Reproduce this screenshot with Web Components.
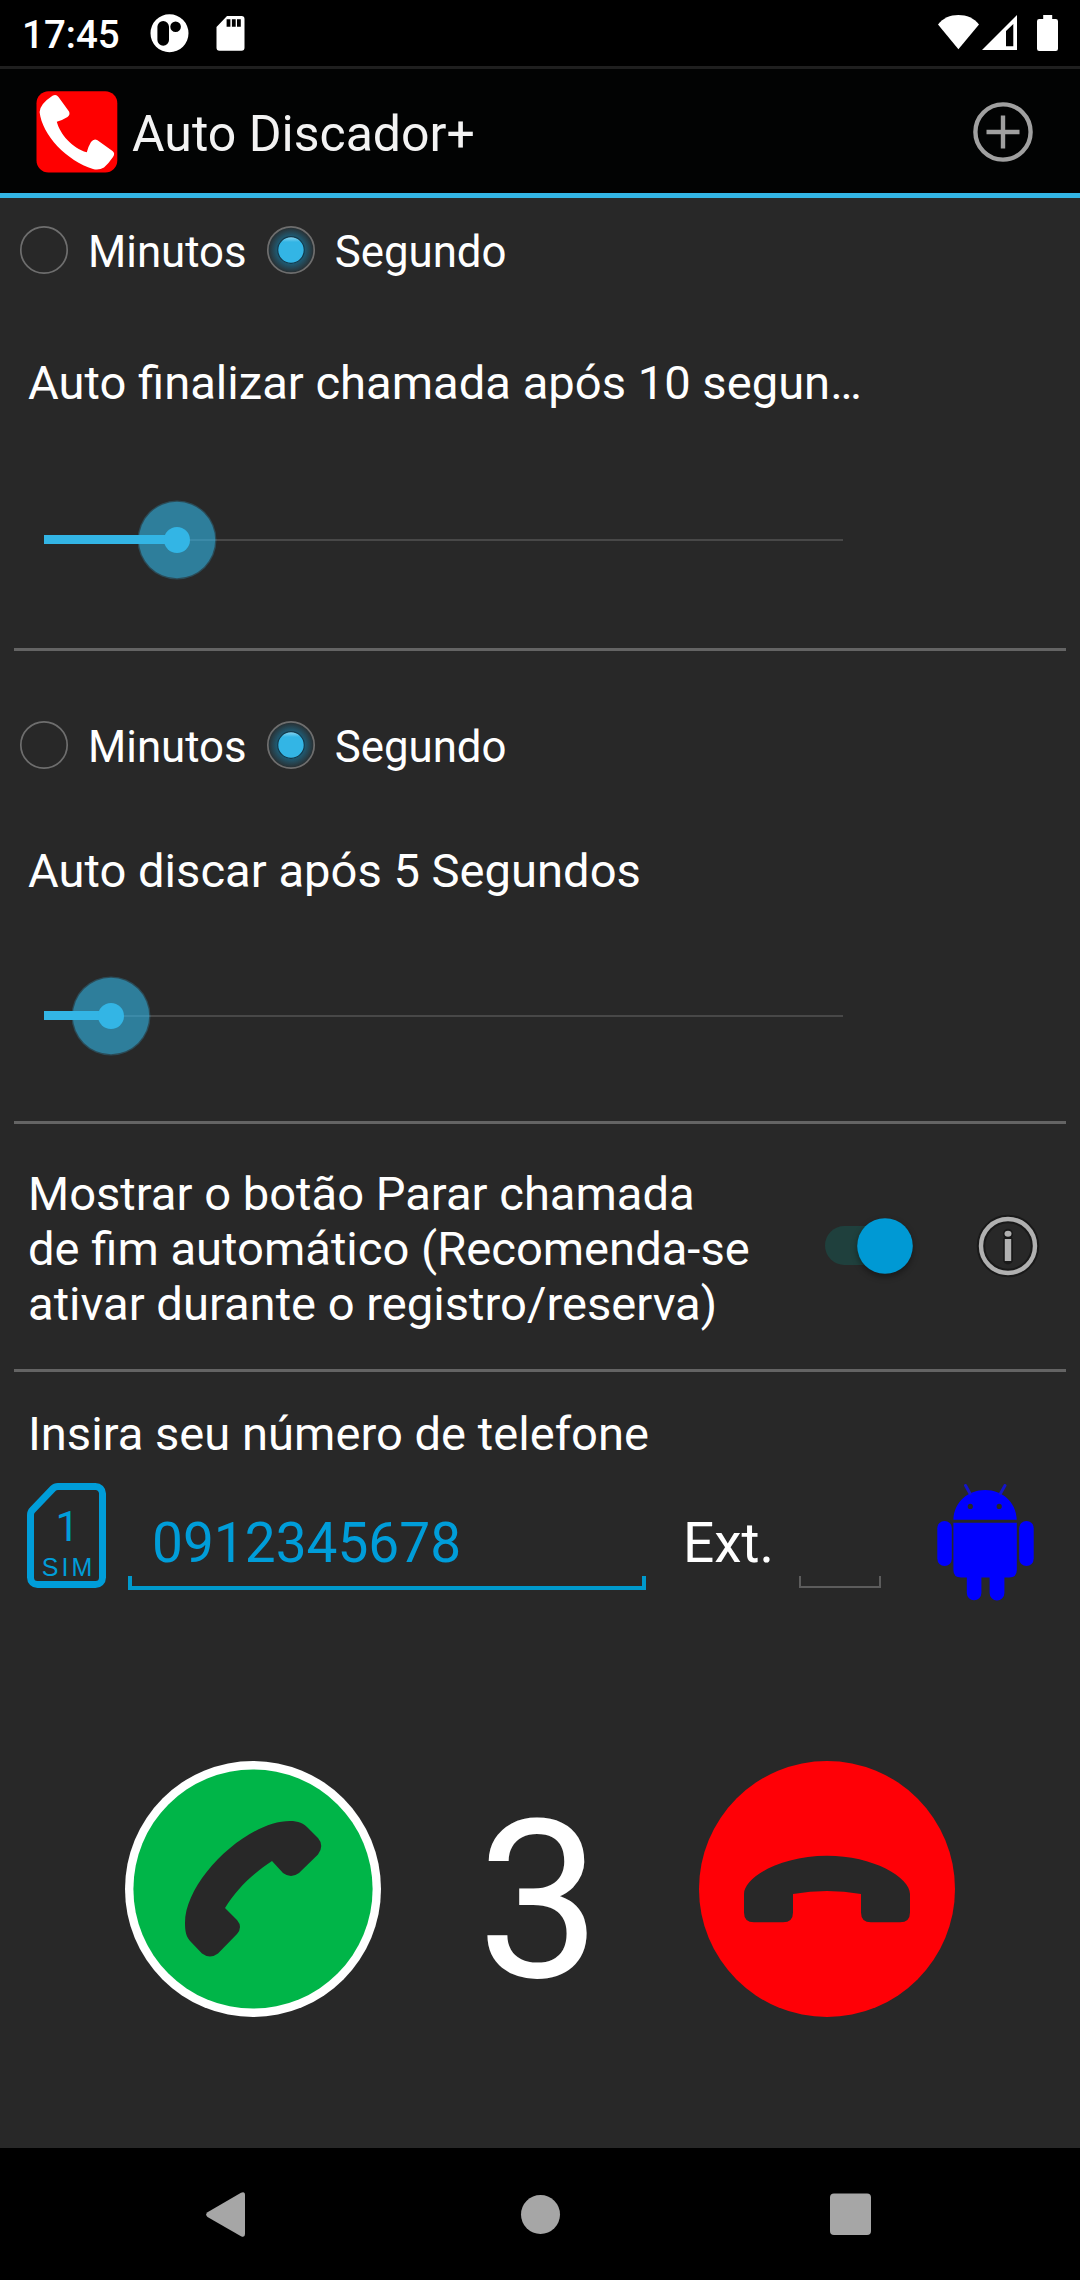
<!DOCTYPE html>
<html lang="pt">
<head>
<meta charset="utf-8">
<title>Auto Discador+</title>
<style>
  body {
    margin: 0;
    width: 1080px;
    height: 2280px;
    overflow: hidden;
    background: #282828;
    color: #ffffff;
    font-family: Roboto, "Liberation Sans", sans-serif;
  }
</style>
</head>
<body>
<dialer-app></dialer-app>

<script>
class StatusBar extends HTMLElement {
  constructor() {
    super();
    const shadow = this.attachShadow({mode: 'open'});
    shadow.innerHTML = `
    <style>
    :host {
      display: flex;
      justify-content: space-between;
      box-sizing: border-box;
      height: 69px;
      padding-left: 22px;
      background: #000000;
      border-bottom: 3px solid #1f1f1f;
    }
    .left { display: flex; }
    .time {
      width: 122px;
      font-size: 38.5px;
      font-weight: 500;
      line-height: 69px;
    }
    svg { display: block; fill: #ffffff; }
    </style>
    <div class="left">
      <span class="time"><slot></slot></span>
      <svg width="110" height="66" viewBox="144 0 110 66">
        <path fill-rule="evenodd" d="M169.5 14.3a19 19 0 1 0 0 38a19 19 0 1 0 0-38zM163.2 21a5.8 5.8 0 0 1 5.8 5.8V40a5.8 5.8 0 0 1-11.6 0V26.8a5.8 5.8 0 0 1 5.8-5.8zM175.6 21.4a5.3 5.3 0 1 1 0 10.6a5.3 5.3 0 1 1 0-10.6z"/>
        <path fill-rule="evenodd" d="M227 16h14.5q3 0 3 3v28.8q0 3-3 3h-22q-3 0-3-3V27zM226.6 19.3v7.4h3.8v-7.4zM231.9 19.3v7.4h3.8v-7.4zM237 19.3v7.4h3.8v-7.4z"/>
      </svg>
    </div>
    <svg width="150" height="66" viewBox="930 0 150 66">
      <path d="M958.4 49.3L938 24.6C943 18 950 15 958.4 15S974 18 979 24.6z"/>
      <path fill-rule="evenodd" d="M982 50L1017 15V50zM1006 46.3h7.3V24l-7.3 7z"/>
      <path d="M1043.2 15h9v4h3.6q2.2 0 2.2 2.2v27.6q0 2.2-2.2 2.2h-16.6q-2.2 0-2.2-2.2v-27.6q0-2.2 2.2-2.2h4z"/>
    </svg>
    `;
  }
}

class ActionBar extends HTMLElement {
  constructor() {
    super();
    const shadow = this.attachShadow({mode: 'open'});
    shadow.innerHTML = `
    <style>
    :host {
      display: flex;
      align-items: center;
      box-sizing: border-box;
      height: 129px;
      padding: 2px 44px 0 36px;
      background: #020303;
      border-bottom: 5px solid #33b5e5;
    }
    svg { display: block; }
    .title {
      flex: 1;
      margin: 4px 0 0 14px;
      color: #f3f3f3;
      font-size: 50px;
      line-height: 58px;
    }
    </style>
    <svg width="82" height="82" viewBox="36 91 82 82">
      <rect x="36.5" y="91.2" width="80.8" height="81.3" rx="12" fill="#ff0000"/>
      <path fill="#ffffff" d="M52.5 95.8Q56 93.5 58.5 97L69 111.5Q70.5 114.5 67.5 117Q62 120.5 56.8 121.7C60 134 72 148 86.8 152.3Q88 147 91 142Q94 138 97.5 140.3L112.5 151Q115.500 153.5 113 157Q109 163 104 167.5Q99 170.5 93 169C67 161 42 135 39.6 112Q40 104 52.5 95.8z"/>
    </svg>
    <span class="title"><slot></slot></span>
    <svg width="66" height="66" viewBox="-33 -33 66 66" fill="none" stroke="#a0a0a0" stroke-width="4.4">
      <circle r="27.6"/>
      <path d="M-16.5 0h33M0 -16.5v33"/>
    </svg>
    `;
  }
}

class RadioOption extends HTMLElement {
  constructor() {
    super();
    const shadow = this.attachShadow({mode: 'open'});
    const on = this.hasAttribute('checked');
    shadow.innerHTML = `
    <style>
    :host {
      display: flex;
      align-items: center;
      height: 88px;
      font-size: 43.8px;
      line-height: 52px;
    }
    svg { display: block; }
    span { margin-top: 4px; }
    </style>
    <svg width="88" height="88" viewBox="-44 -44 88 88">
      <defs>
        <radialGradient id="glow">
          <stop offset="0.55" stop-color="#1d5f7a"/>
          <stop offset="0.8" stop-color="#26434f"/>
          <stop offset="1" stop-color="#282c2e"/>
        </radialGradient>
        <linearGradient id="dot" x2="0" y2="1">
          <stop offset="0" stop-color="#8fd6f0"/>
          <stop offset="0.2" stop-color="#33b5e5"/>
        </linearGradient>
      </defs>
      <circle r="23.2" fill="${on ? 'url(#glow)' : 'none'}" stroke="#6e6e6e" stroke-width="1.7"/>
      ${on ? '<circle r="13.3" fill="url(#dot)" stroke="#14394a" stroke-width="1.2"/>' : ''}
    </svg>
    <span><slot></slot></span>
    `;
  }
}

class SeekBar extends HTMLElement {
  constructor() {
    super();
    const shadow = this.attachShadow({mode: 'open'});
    const pos = Number(this.getAttribute('value'));
    shadow.innerHTML = `
    <style>
    :host { display: block; height: 88px; }
    svg { display: block; overflow: visible; }
    </style>
    <svg width="887" height="88" viewBox="-44 -44 887 88">
      <rect x="0" y="-1" width="799" height="2" fill="#484848"/>
      <circle cx="${pos}" r="39.5" fill="#33b5e5" fill-opacity="0.25"/>
      <circle cx="${pos}" r="38.2" fill="#33b5e5" fill-opacity="0.48"/>
      <rect x="0" y="-5" width="${pos}" height="9" fill="#33b5e5"/>
      <circle cx="${pos}" r="13" fill="#33b5e5"/>
    </svg>
    `;
  }
}

/* Unit choice, caption and seek bar of one timer. */
class TimerSetting extends HTMLElement {
  constructor() {
    super();
    const shadow = this.attachShadow({mode: 'open'});
    shadow.innerHTML = `
    <style>
    :host {
      display: flex;
      flex-direction: column;
      box-sizing: border-box;
      height: var(--height);
      padding-top: var(--top);
    }
    .units { display: flex; }
    .caption {
      margin: var(--caption-gap) 0 var(--bar-gap) 28px;
      font-size: 47.15px;
      line-height: 56px;
      white-space: nowrap;
    }
    </style>
    <div class="units">
      <radio-option>Minutos</radio-option>
      <radio-option checked>Segundo</radio-option>
    </div>
    <div class="caption"><slot></slot></div>
    <seek-bar value="${this.getAttribute('value')}"></seek-bar>
    `;
  }
}

class RowDivider extends HTMLElement {
  constructor() {
    super();
    const shadow = this.attachShadow({mode: 'open'});
    shadow.innerHTML = `
    <style>
    :host { display: block; height: 3px; margin: 0 14px; background: #646464; }
    </style>
    `;
  }
}

class SwitchRow extends HTMLElement {
  constructor() {
    super();
    const shadow = this.attachShadow({mode: 'open'});
    shadow.innerHTML = `
    <style>
    :host {
      display: flex;
      align-items: center;
      height: 245px;
      padding: 0 32px 0 28px;
    }
    .text {
      width: 727px;
      margin-top: 5px;
      font-size: 47.15px;
      line-height: 55px;
    }
    svg { display: block; margin-bottom: 1px; }
    .switch { margin-left: 60px; }
    .info { margin-left: auto; }
    .thumb { filter: drop-shadow(0 3px 3px rgba(0, 0, 0, 0.4)); }
    </style>
    <div class="text"><slot></slot></div>
    <svg class="switch" width="110" height="80" viewBox="815 1206 110 80">
      <rect x="825" y="1226" width="82" height="39" rx="19.5" fill="#1f403d"/>
      <circle class="thumb" cx="885" cy="1246" r="27.8" fill="#0099d4"/>
    </svg>
    <svg class="info" width="80" height="80" viewBox="-40 -40 80 80">
      <g fill="none" stroke="#191919">
        <circle r="27" stroke-width="8.5"/>
        <path d="M0 -12.2v.1M0 -5.5V13.5" stroke-width="10" stroke-linecap="round"/>
      </g>
      <circle r="27" fill="none" stroke="#b0b0b0" stroke-width="4.4"/>
      <ellipse cy="-12.2" rx="3.5" ry="3" fill="#b0b0b0"/>
      <rect x="-3.2" y="-7" width="6.4" height="22" fill="#b0b0b0"/>
    </svg>
    `;
  }
}

class SimIcon extends HTMLElement {
  constructor() {
    super();
    const shadow = this.attachShadow({mode: 'open'});
    shadow.innerHTML = `
    <style>
    :host { display: block; width: 79px; height: 105px; }
    svg { display: block; }
    text { fill: #009dd9; }
    .name { font-family: "Liberation Sans", Arial, sans-serif; }
    </style>
    <svg width="79" height="105" viewBox="0 0 79 105">
      <path fill="none" stroke="#009dd9" stroke-width="7" d="M31 3.5H68.5a7 7 0 0 1 7 7V94.5a7 7 0 0 1-7 7H10.5a7 7 0 0 1-7-7V32q0-3 2-5L26 5.5q2-2 5-2z"/>
      <text x="28.5" y="57.7" font-size="42">1</text>
      <text class="name" x="14.8" y="92.7" font-size="25" letter-spacing="3">SIM</text>
    </svg>
    `;
  }
}

/* Edit field with the open bracket underline. */
class EditField extends HTMLElement {
  constructor() {
    super();
    const shadow = this.attachShadow({mode: 'open'});
    shadow.innerHTML = `
    <style>
    :host {
      display: flex;
      flex-direction: column;
      color: #009dd9;
    }
    .value {
      flex: 1;
      padding-left: 24px;
      font-size: 55px;
      line-height: 120px;
      height: 0;
    }
    .line {
      box-sizing: border-box;
      height: var(--line-height);
      border: var(--line-width) solid var(--line-color);
      border-top: 0;
    }
    </style>
    <div class="value"><slot></slot></div>
    <div class="line"></div>
    `;
  }
}

class RobotIcon extends HTMLElement {
  constructor() {
    super();
    const shadow = this.attachShadow({mode: 'open'});
    shadow.innerHTML = `
    <style>
    :host { display: block; }
    svg { display: block; }
    </style>
    <svg width="97" height="117" viewBox="0 0 97 117" fill="#0000ff">
      <path fill-rule="evenodd" d="M16.4 35.7C17 18 31 6 48.1 6S79.2 18 79.8 35.7zM33.3 19.8a2.6 2.6 0 1 0 0 5.2a2.6 2.6 0 1 0 0-5.2zM62.2 19.8a2.6 2.6 0 1 0 0 5.2a2.6 2.6 0 1 0 0-5.2z"/>
      <path d="M28.5 1.5L33 9.5M68 1.5L63.5 9.5" stroke="#1515c8" stroke-width="3" stroke-linecap="round"/>
      <rect x="0.3" y="37" width="14.5" height="45" rx="7.25"/>
      <rect x="82.2" y="37" width="14.5" height="45" rx="7.25"/>
      <path d="M16.4 38.7H79.8V86q0 7.5-7.5 7.5H67.4V109a7.4 7.4 0 0 1-14.8 0V93.5H44.4V109a7.3 7.3 0 0 1-14.6 0V93.5H24q-7.6 0-7.6-7.5z"/>
    </svg>
    `;
  }
}

class CallButton extends HTMLElement {
  constructor() {
    super();
    const shadow = this.attachShadow({mode: 'open'});
    const hangup = this.getAttribute('kind') === 'hangup';
    const circle = hangup
      ? '<circle cx="128" cy="128" r="128" fill="#ff0006"/>'
      : '<circle cx="128" cy="128" r="128" fill="#ffffff"/><circle cx="128" cy="128" r="119.6" fill="#00b548"/>';
    const handset = hangup
      ? 'M128 94.7C174 94.7 211 116 211 133V151.5Q211 161.3 201 161.3H172Q162 161.3 162 151.5V133Q128 127 94 133V151.5Q94 161.3 84 161.3H55Q45 161.3 45 151.5V133C45 116 82 94.7 128 94.7z'
      : 'M165 60C173 60 179 62.5 183 67L193 77Q199.5 84.5 193 93.5L174 112Q166 118 158 112L147 100C127 113 111 129 100 147L112 159Q118 166 112 173L93 192.5Q85 198.5 77 192.5L66 181C61 176 60 170 60 162C60 119 122 60 165 60z';
    shadow.innerHTML = `
    <style>
    :host { display: block; }
    svg { display: block; }
    </style>
    <svg width="256" height="256" viewBox="0 0 256 256">${circle}<path fill="#282828" d="${handset}"/></svg>
    `;
  }
}

class NavBar extends HTMLElement {
  constructor() {
    super();
    const shadow = this.attachShadow({mode: 'open'});
    shadow.innerHTML = `
    <style>
    :host {
      display: flex;
      align-items: center;
      justify-content: space-between;
      box-sizing: border-box;
      height: 132px;
      padding: 0 205px;
      background: #000000;
    }
    svg { display: block; fill: #a6a6a6; }
    </style>
    <svg width="48" height="48" viewBox="205 2190 48 48"><path d="M207.5 2212.2L241 2192.7Q245 2191 245 2195V2234Q245 2238 241 2236.2L207.5 2217Q204.8 2214.6 207.5 2212.2z"/></svg>
    <svg width="48" height="48" viewBox="-24.5 -24.5 48 48"><circle r="19.5"/></svg>
    <svg width="48" height="48" viewBox="827 2190.5 48 48"><rect x="830" y="2194" width="41" height="41.5" rx="4"/></svg>
    `;
  }
}

class DialerApp extends HTMLElement {
  constructor() {
    super();
    const shadow = this.attachShadow({mode: 'open'});
    shadow.innerHTML = `
    <style>
    :host {
      display: flex;
      flex-direction: column;
      width: 1080px;
      height: 2280px;
    }
    .end { --height: 450px; --top: 8px; --caption-gap: 61px; --bar-gap: 85px; }
    .dial { --height: 470px; --top: 50px; --caption-gap: 54px; --bar-gap: 73px; }
    .phone-label {
      margin: 34px 0 21px 28px;
      font-size: 47.15px;
      line-height: 56px;
    }
    .phone {
      display: flex;
      align-items: flex-start;
      height: 118px;
      padding-left: 27px;
    }
    .number {
      --line-color: #0099cc;
      --line-width: 4px;
      --line-height: 14px;
      width: 518px;
      height: 107px;
      margin-left: 22px;
    }
    .ext-label {
      width: 116px;
      margin-left: 37px;
      font-size: 55px;
      line-height: 120px;
    }
    .ext {
      --line-color: #5c5c5c;
      --line-width: 2px;
      --line-height: 12px;
      width: 82px;
      height: 105px;
    }
    robot-icon { margin: 1px 0 0 56px; }
    .calls {
      display: flex;
      justify-content: space-between;
      padding: 160px 125px 0;
    }
    .count { margin-right: 2px; font-size: 220px; line-height: 282px; height: 256px; }
    nav-bar { margin-top: auto; }
    </style>
    <status-bar>17:45</status-bar>
    <action-bar>Auto Discador+</action-bar>
    <timer-setting class="end" value="133">Auto finalizar chamada após 10 segun…</timer-setting>
    <row-divider></row-divider>
    <timer-setting class="dial" value="67">Auto discar após 5 Segundos</timer-setting>
    <row-divider></row-divider>
    <switch-row>Mostrar o botão Parar chamada de fim automático (Recomenda-se ativar durante o registro/reserva)</switch-row>
    <row-divider></row-divider>
    <div class="phone-label">Insira seu número de telefone</div>
    <div class="phone">
      <sim-icon></sim-icon>
      <edit-field class="number">0912345678</edit-field>
      <span class="ext-label">Ext.</span>
      <edit-field class="ext"></edit-field>
      <robot-icon></robot-icon>
    </div>
    <div class="calls">
      <call-button kind="dial"></call-button>
      <span class="count">3</span>
      <call-button kind="hangup"></call-button>
    </div>
    <nav-bar></nav-bar>
    `;
  }
}

customElements.define("status-bar", StatusBar);
customElements.define("action-bar", ActionBar);
customElements.define("radio-option", RadioOption);
customElements.define("seek-bar", SeekBar);
customElements.define("timer-setting", TimerSetting);
customElements.define("row-divider", RowDivider);
customElements.define("switch-row", SwitchRow);
customElements.define("sim-icon", SimIcon);
customElements.define("edit-field", EditField);
customElements.define("robot-icon", RobotIcon);
customElements.define("call-button", CallButton);
customElements.define("nav-bar", NavBar);
customElements.define("dialer-app", DialerApp);
</script>
</body>
</html>
